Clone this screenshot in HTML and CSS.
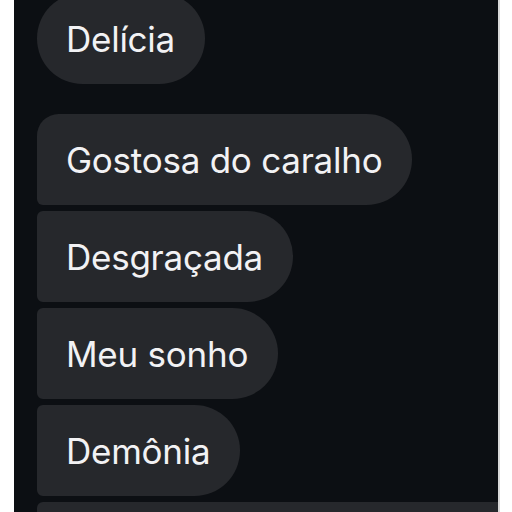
FILE: index.html
```html
<!DOCTYPE html>
<html lang="pt">
<head>
  <meta charset="UTF-8" />
  <title>Mensagens</title>
  <link rel="stylesheet" href="styles.css">
</head>
<body>
  <div id="chat">
    <div class="group">
      <div class="bubble single">Delícia</div>
    </div>
    <div class="group">
      <div class="bubble first">Gostosa do caralho</div>
      <div class="bubble">Desgraçada</div>
      <div class="bubble">Meu sonho</div>
      <div class="bubble">Demônia</div>
      <div class="bubble wide"></div>
    </div>
  </div>
</body>
</html>
```

FILE: styles.css
```css
html, body {
  margin: 0;
  padding: 0;
  width: 100%;
  height: 100%;
  background: #ffffff;
  overflow: hidden;
  font-family: "Inter", "Liberation Sans", sans-serif;
}

#chat {
  margin: 0 0 0 14px;
  width: 486px;
  height: 512px;
  background: #0c0f13;
  border-right: 2px solid #d9d9d9;
  padding-left: 23px;
  box-sizing: border-box;
  overflow: hidden;
}

#chat .group:first-child {
  margin-top: -7px;
}

.group {
  display: flex;
  flex-direction: column;
  align-items: flex-start;
  gap: 6px;
  margin-bottom: 30px;
}

.bubble {
  display: flex;
  align-items: center;
  height: 91px;
  padding: 0 30px 0 29px;
  box-sizing: border-box;
  background: #26282c;
  color: #f2f2f4;
  font-size: 35px;
  letter-spacing: -0.25px;
  white-space: nowrap;
  border-radius: 6px 46px 46px 6px;
}

.bubble.single {
  border-radius: 46px;
}

.bubble.first {
  border-top-left-radius: 22px;
}

.bubble.wide {
  align-self: stretch;
  border-radius: 6px 0 0 6px;
}
```
